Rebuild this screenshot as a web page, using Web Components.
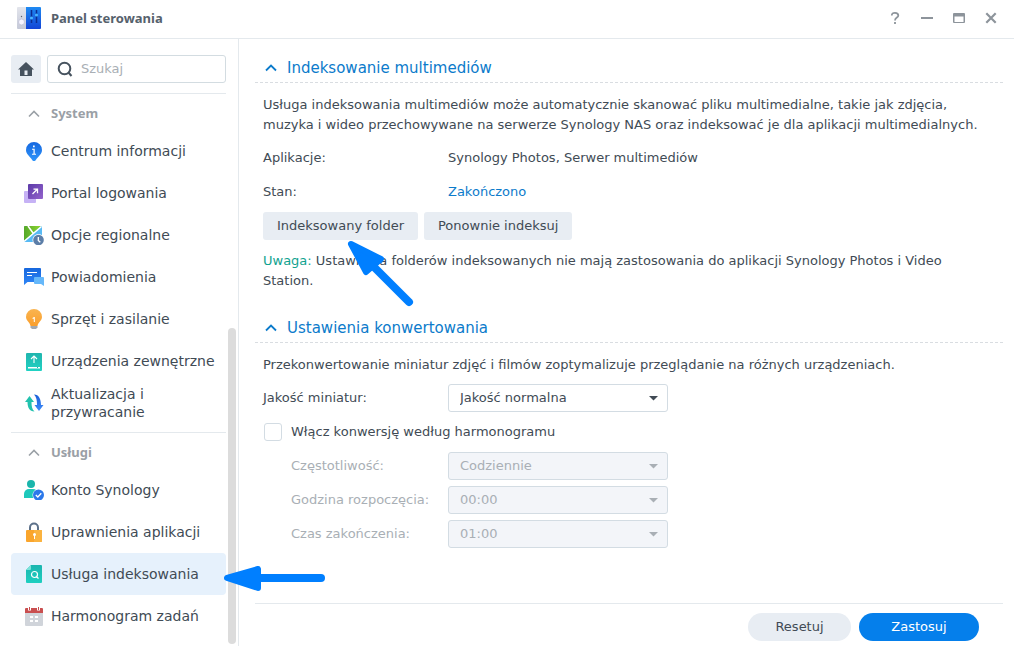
<!DOCTYPE html>
<html lang="pl">
<head>
<meta charset="utf-8">
<meta name="viewport" content="width=device-width, initial-scale=1">
<title>Panel sterowania</title>
<style>
  html, body {
    height: 100%;
    margin: 0;
  }

  body {
    --text: #414b55;
    --muted: #a9afb5;
    --accent: #0c7bcb;
    --line: #e4e9ed;
    --control: #e8edf3;
    --strong-font: "Noto Sans", "DejaVu Sans", sans-serif;
    font: 13px/20px "DejaVu Sans", Verdana, sans-serif;
    color: var(--text);
    background: #fff;
  }
</style>
</head>
<body>
<control-panel>
  <panel-header slot="header">Panel sterowania</panel-header>

  <side-bar slot="sidebar">
    <nav-group label="System">
      <nav-item icon="info">Centrum informacji</nav-item>
      <nav-item icon="portal">Portal logowania</nav-item>
      <nav-item icon="region">Opcje regionalne</nav-item>
      <nav-item icon="message">Powiadomienia</nav-item>
      <nav-item icon="bulb">Sprzęt i zasilanie</nav-item>
      <nav-item icon="drive">Urządzenia zewnętrzne</nav-item>
      <nav-item icon="update">Aktualizacja i przywracanie</nav-item>
    </nav-group>
    <nav-group label="Usługi">
      <nav-item icon="account">Konto Synology</nav-item>
      <nav-item icon="lock">Uprawnienia aplikacji</nav-item>
      <nav-item icon="index" active>Usługa indeksowania</nav-item>
      <nav-item icon="calendar">Harmonogram zadań</nav-item>
    </nav-group>
  </side-bar>

  <panel-section label="Indeksowanie multimediów">
    <text-note>Usługa indeksowania multimediów może automatycznie skanować pliku multimedialne, takie jak zdjęcia, muzyka i wideo przechowywane na serwerze Synology NAS oraz indeksować je dla aplikacji multimedialnych.</text-note>
    <info-row label="Aplikacje:">Synology Photos, Serwer multimediów</info-row>
    <info-row label="Stan:" accent>Zakończono</info-row>
    <button-row>
      <flat-button>Indeksowany folder</flat-button>
      <flat-button>Ponownie indeksuj</flat-button>
    </button-row>
    <text-note label="Uwaga:">Ustawienia folderów indeksowanych nie mają zastosowania do aplikacji Synology Photos i Video Station.</text-note>
  </panel-section>

  <panel-section label="Ustawienia konwertowania">
    <text-note>Przekonwertowanie miniatur zdjęć i filmów zoptymalizuje przeglądanie na różnych urządzeniach.</text-note>
    <select-row label="Jakość miniatur:" value="Jakość normalna"></select-row>
    <check-row>Włącz konwersję według harmonogramu</check-row>
    <select-row label="Częstotliwość:" value="Codziennie" indent disabled></select-row>
    <select-row label="Godzina rozpoczęcia:" value="00:00" indent disabled></select-row>
    <select-row label="Czas zakończenia:" value="01:00" indent disabled></select-row>
  </panel-section>

  <flat-button slot="footer" kind="round">Resetuj</flat-button>
  <flat-button slot="footer" kind="primary">Zastosuj</flat-button>
</control-panel>
<pointer-arrows></pointer-arrows>

<script>
const ICONS = {
  info: `
    <defs><linearGradient id="g" x2="0" y2="1"><stop stop-color="#1668e0"/><stop offset="1" stop-color="#2f95fa"/></linearGradient></defs>
    <path fill="url(#g)" d="M10 1a8 8 0 0 1 8 8c0 4-3.500 6-6.500 10.400q-1.500 1.600-3 0C5.500 15 2 13 2 9a8 8 0 0 1 8-8z"/>
    <path fill="#fff" d="M9 4.500h1.700v1.700H9zM8 7.800h2.700v5H12v1H8v-1h1.500v-4H8z"/>`,
  portal: `
    <defs><linearGradient id="g" x2="1" y2="1"><stop stop-color="#5b3aa8"/><stop offset="1" stop-color="#9463cc"/></linearGradient></defs>
    <rect y="8" width="12" height="12" rx="1" fill="#c6b2f5"/>
    <rect x="4" y="1" width="15" height="15" rx="1" fill="url(#g)"/>
    <path d="M8.500 11 13 6.500M9.500 6.200h4v4" fill="none" stroke="#fff" stroke-width="1.300"/>`,
  region: `
    <defs><linearGradient id="g" x2="1" y2="0"><stop stop-color="#55a82a"/><stop offset="1" stop-color="#8ed630"/></linearGradient></defs>
    <rect y="1" width="18" height="16" rx="1" fill="#58baf4"/>
    <path d="M0 2a1 1 0 0 1 1-1h16L0 16z" fill="url(#g)"/>
    <path d="M0 16.500 17.500 1.500M4 1l5 7" fill="none" stroke="#fff" stroke-width="1.500"/>
    <circle cx="14.500" cy="15" r="6" fill="#fff"/>
    <circle cx="14.500" cy="15" r="5.300" fill="#5c7ea8"/>
    <path d="M14.300 12v3.500l2 1.800" fill="none" stroke="#fff" stroke-width="1.300"/>`,
  message: `
    <defs><linearGradient id="g" x2="0" y2="1"><stop stop-color="#1767dd"/><stop offset="1" stop-color="#2f86f6"/></linearGradient></defs>
    <path d="M1 1h15a1 1 0 0 1 1 1v13H3.500L0 18V2a1 1 0 0 1 1-1z" fill="url(#g)"/>
    <path d="M3 5.500h10M3 8.500h5" stroke="#fff" stroke-width="1.200"/>
    <path d="M11 10h8a1 1 0 0 1 1 1v8l-3-2h-6a1 1 0 0 1-1-1v-5a1 1 0 0 1 1-1z" fill="#66b8fa"/>`,
  bulb: `
    <defs><linearGradient id="g" x2="0" y2="1"><stop stop-color="#f9b450"/><stop offset="1" stop-color="#fb9f2c"/></linearGradient></defs>
    <path d="M10 0a8 8 0 0 1 8 8c0 4-4 5-4.500 9h-7C6 13 2 12 2 8a8 8 0 0 1 8-8z" fill="url(#g)"/>
    <path d="M8.500 9 10 8h.8v5H9.800v-3.200H8.500z" fill="#fff"/>
    <path d="M6.500 17h7v1.500l-1.500 1.500H8l-1.500-1.500z" fill="#a3a9b0"/>`,
  drive: `
    <defs><linearGradient id="g" x2="0" y2="1"><stop stop-color="#20b5ae"/><stop offset="1" stop-color="#21d2c3"/></linearGradient></defs>
    <rect x="2" y="2" width="16" height="18" rx="1" fill="url(#g)"/>
    <path d="M10 12V5.500M7 8l3-3 3 3" fill="none" stroke="#fff" stroke-width="1.100"/>
    <path d="M4 16h12v1.500H4z" fill="#fff"/><path d="M13 16h1v1h-1z" fill="#20b5ae"/>`,
  update: `
    <defs><linearGradient id="g" x2="0" y2="1"><stop stop-color="#1b5ed8"/><stop offset="1" stop-color="#3f8dfa"/></linearGradient></defs>
    <path d="M5.500 3 1 9h2.500c0 5.500 2 9.500 7 9.500C8 16.500 7.500 13 7.500 9H10z" fill="#22c2ae"/>
    <path d="M15 18l4.500-6H17c0-5.500-2-10.500-7-10.500C12.500 4 13 7.500 13 12h-2.500z" fill="url(#g)"/>`,
  account: `
    <circle cx="7" cy="4" r="4" fill="#19b5ac"/>
    <path d="M0 18v-4a5 5 0 0 1 5-5h4a5 5 0 0 1 5 5v4z" fill="#1ec8bb"/>
    <circle cx="14.500" cy="15" r="6" fill="#fff"/>
    <circle cx="14.500" cy="15" r="5.500" fill="#2b78ea"/>
    <path d="M11.800 15l2 2 3.500-3.700" fill="none" stroke="#fff" stroke-width="1.300"/>`,
  lock: `
    <path d="M6 9V5.500a4 4 0 0 1 8 0V9" fill="none" stroke="#5d718a" stroke-width="2"/>
    <rect x="2" y="8" width="16" height="12" rx="1" fill="#faa52c"/>
    <path d="M10 20V8h7a1 1 0 0 1 1 1v10a1 1 0 0 1-1 1z" fill="#fbb33f"/>
    <circle cx="10.500" cy="12.500" r="1.500" fill="#fff"/><path d="M10 13h1v4h-1z" fill="#fff"/>`,
  index: `
    <defs><linearGradient id="g" x2="0" y2="1"><stop stop-color="#1bb5af"/><stop offset="1" stop-color="#1fcfc0"/></linearGradient></defs>
    <path d="M7 1h10a1 1 0 0 1 1 1v16a1 1 0 0 1-1 1H3a1 1 0 0 1-1-1V6z" fill="url(#g)"/>
    <path d="M7 1v4a1 1 0 0 1-1 1H2z" fill="#7be3da"/>
    <circle cx="10.500" cy="10.500" r="3" fill="none" stroke="#fff" stroke-width="1.200"/>
    <path d="M12.500 12.800l2 1.700" stroke="#fff" stroke-width="1.300"/>`,
  calendar: `
    <path d="M1 7h18v12a1 1 0 0 1-1 1H2a1 1 0 0 1-1-1z" fill="#d0d4da"/>
    <path d="M1 3a1 1 0 0 1 1-1h16a1 1 0 0 1 1 1v4H1z" fill="#c94f50"/>
    <path d="M4 1h3v3.500H4zM13 1h3v3.500h-3z" fill="#fff"/>
    <path d="M5 1h1v3H5zM14 1h1v3h-1z" fill="#c94f50"/>
    <path d="M6 10h3v2H6zM11 10h3v2h-3zM6 14h3v2H6zM11 14h3v2h-3z" fill="#fff"/>`
};

// Attaches an open root and fills it with the given markup
class BaseElement extends HTMLElement {
  constructor() {
    super();
    this._shadowRoot = this.attachShadow({mode: 'open'});
  }

  connectedCallback() {
    this._shadowRoot.innerHTML = this.render();
  }

  attr(name) {
    return this.getAttribute(name) || '';
  }
}

class ControlPanel extends BaseElement {
  render() {
    return `
      <style>
        :host {
          display: flex;
          flex-direction: column;
          height: 100%;
          overflow: hidden;
        }

        .body {
          display: flex;
          flex: 1;
          min-height: 0;
        }

        .main {
          display: flex;
          flex: 1;
          flex-direction: column;
          min-width: 0;
          padding: 13px 11px 0 16px;
        }

        .content {
          display: flex;
          flex: 1;
          flex-direction: column;
          gap: 18px;
          min-height: 0;
          overflow: hidden;
        }

        footer {
          display: flex;
          justify-content: flex-end;
          gap: 8px;
          padding: 9px 24px 5px;
          border-top: 1px solid var(--line);
        }
      </style>
      <slot name="header"></slot>
      <div class="body">
        <slot name="sidebar"></slot>
        <main class="main">
          <div class="content"><slot></slot></div>
          <footer><slot name="footer"></slot></footer>
        </main>
      </div>
    `;
  }
}

class PanelHeader extends BaseElement {
  render() {
    return `
      <style>
        :host {
          display: flex;
          align-items: center;
          height: 38px;
          padding: 0 15px 0 16px;
          border-bottom: 1px solid var(--line);
        }

        h1 {
          flex: 1;
          margin: 0 0 2px 10px;
          font: bold 13px/36px var(--strong-font);
          color: #56616c;
        }

        .logo,
        .tools {
          margin-bottom: 2px;
        }

        .tools {
          display: flex;
          gap: 16px;
        }

        button {
          display: flex;
          padding: 0;
          border: 0;
          background: none;
          color: #8d949b;
        }
      </style>
      <svg class="logo" width="25" height="24" viewBox="0 0 25 24">
        <defs>
          <linearGradient id="a" x2="0" y2="1"><stop stop-color="#e3e5ec"/><stop offset="1" stop-color="#c5c9d8"/></linearGradient>
          <linearGradient id="b" x2="0" y2="1"><stop stop-color="#1e8af2"/><stop offset="1" stop-color="#1244d6"/></linearGradient>
        </defs>
        <path d="M2 1h8v22H2a1 1 0 0 1-1-1V2a1 1 0 0 1 1-1z" fill="url(#a)"/>
        <path d="M10 1h14a1 1 0 0 1 1 1v20a1 1 0 0 1-1 1H10z" fill="url(#b)"/>
        <circle cx="5.500" cy="16" r="3" fill="#f6f4ff" stroke="#b9bbd2" stroke-width=".7"/>
        <circle cx="5.500" cy="10.500" r=".7" fill="#5a6070"/>
        <path d="M15.500 4v13M20.500 4v13" stroke="#0c2c91" stroke-width="1.500"/>
        <circle cx="15.500" cy="12" r="1.600" fill="#48b5ff"/>
        <circle cx="20.500" cy="9" r="1.600" fill="#48b5ff"/>
      </svg>
      <h1><slot></slot></h1>
      <div class="tools">
        <button aria-label="Pomoc"><svg width="16" height="16" viewBox="0 0 16 16" fill="none" stroke="currentColor" stroke-width="1.800"><path d="M4.800 5.500C4.800 3.500 6 2.800 8 2.800s3.300.9 3.300 2.600C11.300 7.700 8 7.500 8 10.500M8 12v2"/></svg></button>
        <button aria-label="Minimalizuj"><svg width="16" height="16" viewBox="0 0 16 16"><path d="M2 7h12v2H2z" fill="currentColor"/></svg></button>
        <button aria-label="Maksymalizuj"><svg width="16" height="16" viewBox="0 0 16 16"><path d="M3 3h10a1 1 0 0 1 1 1v8a1 1 0 0 1-1 1H3a1 1 0 0 1-1-1V4a1 1 0 0 1 1-1zm.500 3.500V12h9V6.500z" fill="currentColor" fill-rule="evenodd"/></svg></button>
        <button aria-label="Zamknij"><svg width="16" height="16" viewBox="0 0 16 16" stroke="currentColor" stroke-width="2.200"><path d="M3.300 3.300l9.400 9.400M12.700 3.300l-9.400 9.400"/></svg></button>
      </div>
    `;
  }
}

class SideBar extends BaseElement {
  render() {
    return `
      <style>
        :host {
          position: relative;
          box-sizing: border-box;
          flex: none;
          width: 239px;
          padding: 16px 12px 0 11px;
          border-right: 1px solid var(--line);
          overflow: hidden;
        }

        .tools {
          display: flex;
          gap: 6px;
          padding-bottom: 10px;
        }

        .home {
          display: flex;
          align-items: center;
          justify-content: center;
          width: 30px;
          height: 28px;
          padding: 0;
          border: 0;
          border-radius: 3px;
          background: var(--control);
        }

        .search {
          display: flex;
          flex: 1;
          align-items: center;
          gap: 8px;
          min-width: 0;
          height: 26px;
          padding-left: 9px;
          border: 1px solid #d3dce1;
          border-radius: 3px;
        }

        input {
          flex: 1;
          min-width: 0;
          padding: 0;
          border: 0;
          outline: 0;
          font: inherit;
          color: inherit;
          background: none;
        }

        input::placeholder {
          color: var(--muted);
          opacity: 1;
        }

        .thumb {
          position: absolute;
          right: 2px;
          bottom: 2px;
          width: 8px;
          height: 52%;
          border-radius: 4px;
          background: #dcdcdc;
        }
      </style>
      <div class="tools">
        <button class="home" aria-label="Strona główna">
          <svg width="16" height="16" viewBox="0 0 16 16"><path d="M8 1l8 7.500h-2V15H2V8.500H0zM6.500 9.500V14h3V9.500z" fill="#46525e" fill-rule="evenodd"/></svg>
        </button>
        <label class="search">
          <svg width="16" height="16" viewBox="0 0 16 16" fill="none" stroke="#46525e" stroke-width="2"><circle cx="7.500" cy="7.500" r="5.800"/><path d="M11.500 11.500l3 3.500"/></svg>
          <input type="text" placeholder="Szukaj" aria-label="Szukaj">
        </label>
      </div>
      <nav><slot></slot></nav>
      <div class="thumb"></div>
    `;
  }
}

class NavGroup extends BaseElement {
  render() {
    return `
      <style>
        :host {
          display: block;
          padding-bottom: 8px;
          border-top: 1px solid var(--line);
        }

        h2 {
          display: flex;
          align-items: center;
          gap: 10px;
          height: 34px;
          margin: 0;
          padding: 2px 0 0 16px;
          font: bold 13px/20px var(--strong-font);
          color: #9aa0a6;
        }
      </style>
      <h2>
        <svg width="14" height="12" viewBox="0 0 14 12" fill="none" stroke="currentColor" stroke-width="1.600"><path d="M2 9.500L7 4.500l5 5"/></svg>
        ${this.attr('label')}
      </h2>
      <slot></slot>
    `;
  }
}

class NavItem extends BaseElement {
  render() {
    return `
      <style>
        :host {
          display: block;
        }

        a {
          display: flex;
          align-items: center;
          gap: 7px;
          height: 42px;
          padding-left: 13px;
          border-radius: 4px;
          font-size: 14px;
          line-height: 18px;
          color: inherit;
          text-decoration: none;
        }

        :host([active]) a {
          background: #e6f1fc;
        }

        svg {
          flex: none;
        }
      </style>
      <a href="#${this.attr('icon')}">
        <svg width="20" height="20" viewBox="0 0 20 20">${ICONS[this.attr('icon')]}</svg>
        <span><slot></slot></span>
      </a>
    `;
  }
}

class PanelSection extends BaseElement {
  render() {
    return `
      <style>
        :host {
          display: block;
        }

        h2 {
          display: flex;
          align-items: center;
          gap: 9px;
          height: 28px;
          margin: 0;
          padding: 2px 0 0 9px;
          border-bottom: 1px dashed #d9dde1;
          font-size: 15px;
          font-weight: normal;
          color: var(--accent);
        }

        .rows {
          display: flex;
          flex-direction: column;
          gap: 6px;
          padding: 7px 8px 0;
        }
      </style>
      <h2>
        <svg width="14" height="12" viewBox="0 0 14 12" fill="none" stroke="currentColor" stroke-width="1.800"><path d="M2 8.500l5-5 5 5"/></svg>
        ${this.attr('label')}
      </h2>
      <div class="rows"><slot></slot></div>
    `;
  }
}

class TextNote extends BaseElement {
  render() {
    const label = this.attr('label') ? `<span>${this.attr('label')}</span> ` : '';
    return `
      <style>
        :host {
          display: block;
          padding: 5px 0 3px;
        }

        p {
          margin: 0;
        }

        span {
          color: #11a28f;
        }
      </style>
      <p>${label}<slot></slot></p>
    `;
  }
}

class InfoRow extends BaseElement {
  render() {
    return `
      <style>
        :host {
          display: grid;
          grid-template-columns: 185px 1fr;
          align-items: center;
          height: 28px;
        }

        :host([accent]) .value {
          color: var(--accent);
        }
      </style>
      <span>${this.attr('label')}</span>
      <span class="value"><slot></slot></span>
    `;
  }
}

class ButtonRow extends BaseElement {
  render() {
    return `
      <style>
        :host {
          display: flex;
          gap: 6px;
        }
      </style>
      <slot></slot>
    `;
  }
}

class FlatButton extends BaseElement {
  render() {
    return `
      <style>
        :host {
          display: block;
        }

        button {
          height: 28px;
          padding: 0 14px;
          border: 0;
          border-radius: 3px;
          font: inherit;
          color: inherit;
          background: var(--control);
        }

        :host([kind]) button {
          min-width: 103px;
          border-radius: 14px;
        }

        :host([kind="primary"]) button {
          min-width: 120px;
          color: #fff;
          background: #057feb;
        }
      </style>
      <button type="button"><slot></slot></button>
    `;
  }
}

class SelectRow extends BaseElement {
  render() {
    const disabled = this.hasAttribute('disabled') ? 'disabled' : '';
    return `
      <style>
        :host {
          display: grid;
          grid-template-columns: 185px 220px;
          align-items: center;
        }

        :host([indent]) label {
          padding-left: 28px;
        }

        :host([disabled]) {
          color: var(--muted);
        }

        .box {
          position: relative;
        }

        select {
          width: 100%;
          height: 28px;
          padding: 0 28px 0 11px;
          border: 1px solid #d3dce3;
          border-radius: 3px;
          appearance: none;
          font: inherit;
          color: inherit;
          background: #fff;
          opacity: 1;
        }

        select:disabled {
          background: #f3f5f9;
        }

        svg {
          position: absolute;
          top: 12px;
          right: 10px;
          pointer-events: none;
        }
      </style>
      <label for="field">${this.attr('label')}</label>
      <div class="box">
        <select id="field" ${disabled}><option>${this.attr('value')}</option></select>
        <svg width="9" height="5" viewBox="0 0 9 5"><path d="M0 0h9L4.500 4.500z" fill="currentColor"/></svg>
      </div>
    `;
  }
}

class CheckRow extends BaseElement {
  render() {
    return `
      <style>
        :host {
          display: block;
        }

        label {
          display: flex;
          align-items: center;
          gap: 9px;
          height: 28px;
          padding-left: 1px;
        }

        input {
          box-sizing: border-box;
          width: 18px;
          height: 18px;
          margin: 0;
          border: 1px solid #d3dce3;
          border-radius: 3px;
          appearance: none;
          background: #fff;
        }
      </style>
      <label><input type="checkbox"><span><slot></slot></span></label>
    `;
  }
}

// Blue markers laid over the window
class PointerArrows extends BaseElement {
  render() {
    return `
      <style>
        :host {
          position: absolute;
          top: 0;
          left: 0;
          pointer-events: none;
        }

        svg {
          display: block;
        }
      </style>
      <svg width="420" height="600" viewBox="0 0 420 600" fill="#007fff" stroke="#007fff" stroke-linecap="round" stroke-linejoin="round">
        <path d="M351 244l30 15-15 13z" stroke-width="6"/>
        <path d="M370 263l39 39" stroke-width="8"/>
        <path d="M227 578l31-9v19z" stroke-width="6"/>
        <path d="M250 578h71" stroke-width="8"/>
      </svg>
    `;
  }
}

customElements.define('control-panel', ControlPanel);
customElements.define('panel-header', PanelHeader);
customElements.define('side-bar', SideBar);
customElements.define('nav-group', NavGroup);
customElements.define('nav-item', NavItem);
customElements.define('panel-section', PanelSection);
customElements.define('text-note', TextNote);
customElements.define('info-row', InfoRow);
customElements.define('button-row', ButtonRow);
customElements.define('flat-button', FlatButton);
customElements.define('select-row', SelectRow);
customElements.define('check-row', CheckRow);
customElements.define('pointer-arrows', PointerArrows);
</script>
</body>
</html>
